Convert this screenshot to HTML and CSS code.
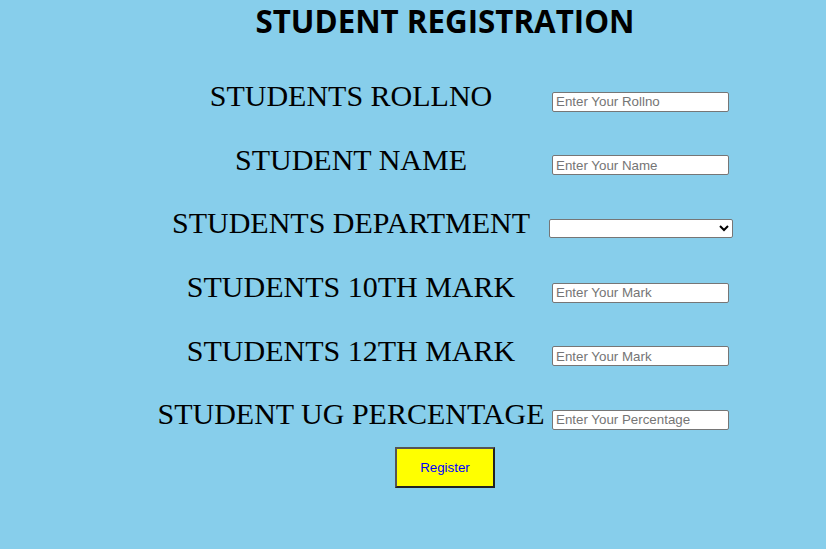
FILE: index.html
```html
<!DOCTYPE html>
<html>
<head>
<meta charset="utf-8">
<link rel="stylesheet" href="styles.css">
</head>
<body>
<div class="page">
  <h1 class="title">STUDENT REGISTRATION</h1>
  <form class="form">
    <div class="row">
      <label class="label">STUDENTS ROLLNO</label>
      <div class="field"><input class="input" type="text" placeholder="Enter Your Rollno"></div>
    </div>
    <div class="row">
      <label class="label">STUDENT NAME</label>
      <div class="field"><input class="input" type="text" placeholder="Enter Your Name"></div>
    </div>
    <div class="row">
      <label class="label">STUDENTS DEPARTMENT</label>
      <div class="field"><select class="select"><option></option></select></div>
    </div>
    <div class="row">
      <label class="label">STUDENTS 10TH MARK</label>
      <div class="field"><input class="input" type="text" placeholder="Enter Your Mark"></div>
    </div>
    <div class="row">
      <label class="label">STUDENTS 12TH MARK</label>
      <div class="field"><input class="input" type="text" placeholder="Enter Your Mark"></div>
    </div>
    <div class="row">
      <label class="label">STUDENT UG PERCENTAGE</label>
      <div class="field"><input class="input" type="text" placeholder="Enter Your Percentage"></div>
    </div>
    <div class="actions">
      <button class="button" type="button">Register</button>
    </div>
  </form>
</div>
</body>
</html>
```

FILE: styles.css
```css
html, body {
  margin: 0;
  padding: 0;
  background: #87ceeb;
  height: 100%;
}
.page {
  padding-left: 64px;
}
.title {
  margin: 0;
  text-align: center;
  font-family: "Open Sans", sans-serif;
  font-weight: 700;
  font-size: 31.3px;
  line-height: 42px;
  color: #000;
}
.form {
  display: flex;
  flex-direction: column;
  align-items: center;
  padding-top: 28px;
}
.row {
  display: grid;
  grid-template-columns: 392px 188px;
  height: 63.6px;
  align-items: center;
}
.label {
  text-align: center;
  white-space: nowrap;
  font-family: "Liberation Serif", "Times New Roman", serif;
  font-size: 30px;
  color: #000;
  padding-bottom: 11px;
}
.field {
  display: flex;
  justify-content: flex-start;
}
.input {
  box-sizing: border-box;
  width: 177px;
  height: 20px;
  margin-left: 5px;
  border: 1px solid #767676;
  border-radius: 2px;
  padding: 1px 3px;
  font-family: "Liberation Sans", Arial, sans-serif;
  font-size: 13.33px;
  background: #fff;
}
.input::placeholder {
  color: #757575;
}
.select {
  box-sizing: border-box;
  width: 184px;
  height: 19px;
  margin-left: 2px;
  border: 1px solid #767676;
  border-radius: 2px;
  background: #fff;
  font-family: "Liberation Sans", Arial, sans-serif;
  font-size: 13.33px;
}
.actions {
  margin-top: -5px;
  display: flex;
  justify-content: center;
}
.button {
  box-sizing: border-box;
  width: 100px;
  height: 41px;
  background: #ffff00;
  border: 2px solid;
  border-color: #555 #222 #222 #555;
  color: #0000ff;
  font-family: "Liberation Sans", Arial, sans-serif;
  font-size: 13.33px;
  padding: 0;
}
```
